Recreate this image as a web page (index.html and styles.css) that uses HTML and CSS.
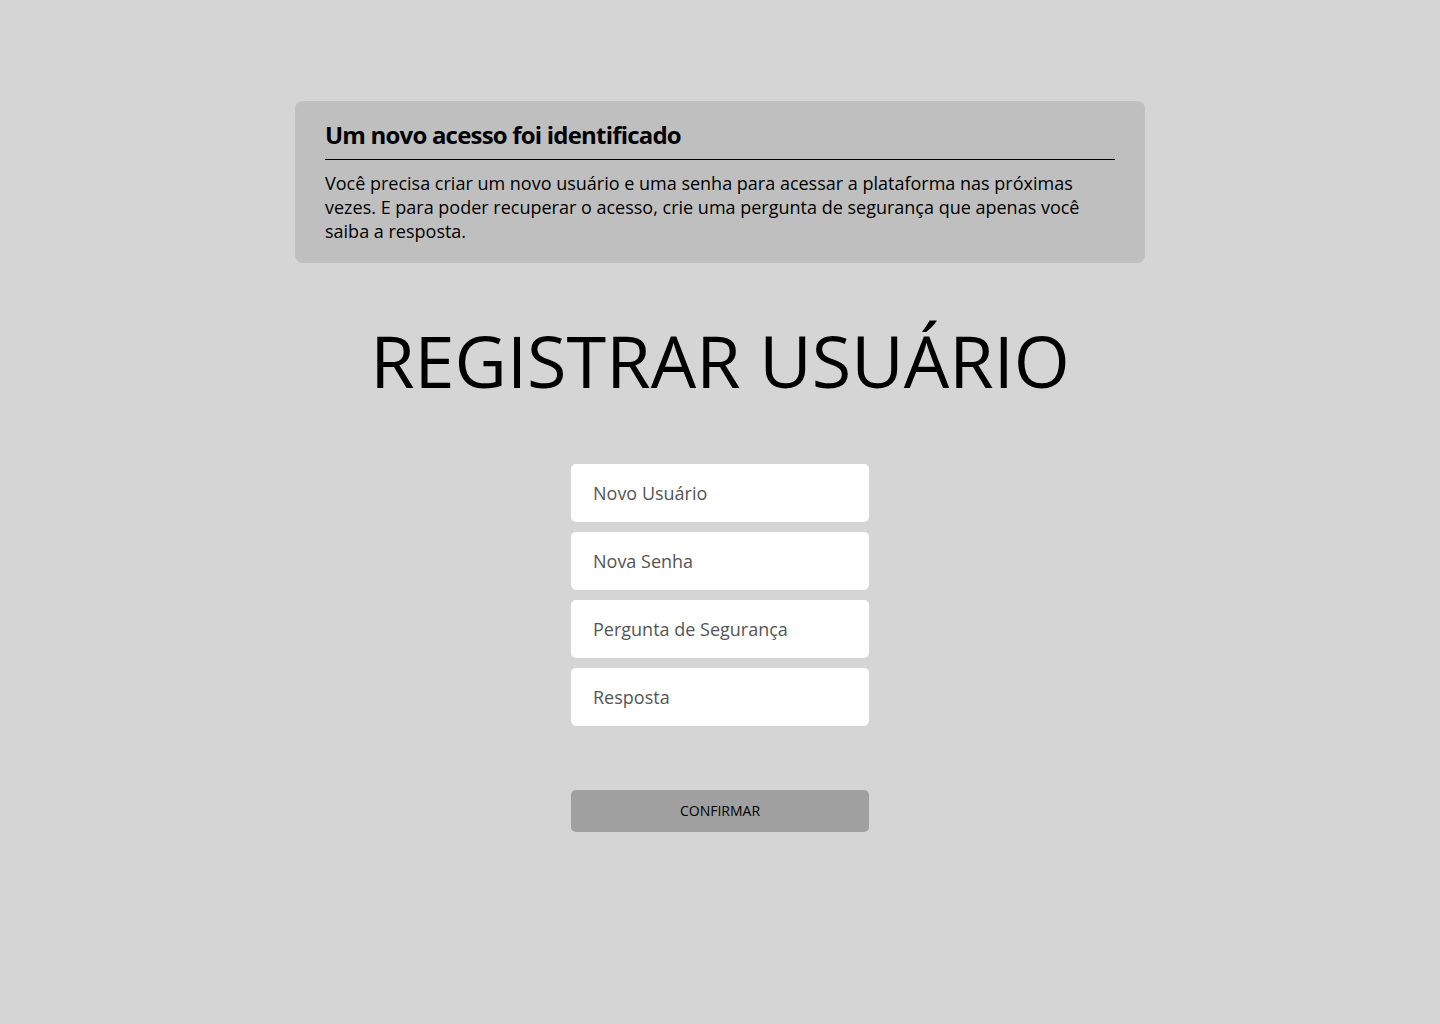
FILE: index.html
```html
<!DOCTYPE html>
<html lang="pt-BR">
<head>
<meta charset="utf-8">
<title>Registrar Usuário</title>
<link rel="stylesheet" href="styles.css">
</head>
<body>
<main class="page">
  <section class="notice">
    <h2 class="notice-title">Um novo acesso foi identificado</h2>
    <p class="notice-text">Você precisa criar um novo usuário e uma senha para acessar a plataforma nas próximas vezes. E para poder recuperar o acesso, crie uma pergunta de segurança que apenas você saiba a resposta.</p>
  </section>
  <h1 class="heading">REGISTRAR USUÁRIO</h1>
  <form class="form">
    <div class="fields">
      <input class="field" type="text" placeholder="Novo Usuário">
      <input class="field" type="password" placeholder="Nova Senha">
      <input class="field" type="text" placeholder="Pergunta de Segurança">
      <input class="field" type="text" placeholder="Resposta">
    </div>
    <button class="btn" type="button">CONFIRMAR</button>
  </form>
</main>
</body>
</html>
```
FILE: styles.css
```css
* { box-sizing: border-box; }
html, body {
  margin: 0;
  padding: 0;
  background: #d5d5d5;
  font-family: "Open Sans", "Liberation Sans", sans-serif;
  color: #000;
}
.page {
  display: flex;
  flex-direction: column;
  align-items: center;
  padding-top: 101px;
  min-height: 1024px;
}
.notice {
  width: 850px;
  background: #bfbfbf;
  border-radius: 8px;
  padding: 17px 30px 20px;
}
.notice-title {
  margin: 0;
  font-size: 24px;
  line-height: 34px;
  font-weight: 700;
  letter-spacing: -0.8px;
  padding-bottom: 7px;
  border-bottom: 1px solid #000;
}
.notice-text {
  margin: 11px 0 0;
  font-size: 18px;
  line-height: 24px;
}
.heading {
  margin: 47px 0 0;
  font-size: 72px;
  line-height: 100px;
  font-weight: 400;
  letter-spacing: 0;
}
.form {
  display: flex;
  flex-direction: column;
  width: 298px;
  margin-top: 54px;
}
.fields {
  display: flex;
  flex-direction: column;
  gap: 10px;
}
.field {
  height: 58px;
  border: none;
  border-radius: 5px;
  background: #fff;
  padding: 0 22px;
  font-family: "Open Sans", "Liberation Sans", sans-serif;
  font-size: 18px;
  color: #333;
  outline: none;
}
.field::placeholder { color: #555; }
.btn {
  margin-top: 64px;
  height: 42px;
  border: none;
  border-radius: 5px;
  background: #a0a0a0;
  font-family: "Open Sans", "Liberation Sans", sans-serif;
  font-size: 14px;
  line-height: 42px;
  padding: 0;
  color: #000;
  cursor: pointer;
}
```
